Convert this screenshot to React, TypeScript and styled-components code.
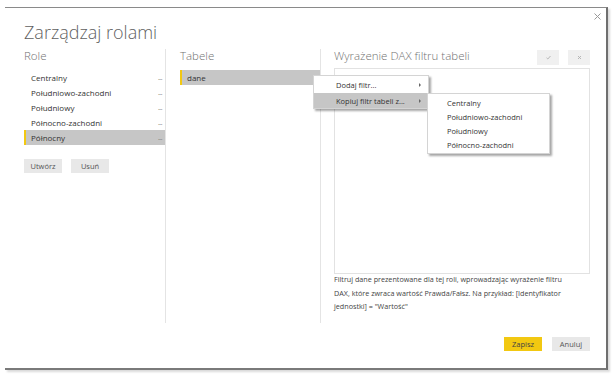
import React from 'react';
import styled, { createGlobalStyle } from 'styled-components';

const GlobalStyle = createGlobalStyle`
  html, body {
    margin: 0;
    padding: 0;
    background: #ffffff;
  }
  body {
    font-family: "Open Sans", "Noto Sans", sans-serif;
    color: #333;
  }
`;

const roles = ['Centralny', 'Południowo-zachodni', 'Południowy', 'Północno-zachodni', 'Północny'];

const App: React.FC = () => {
  const selectedRole = 'Północny';

  return (
    <>
      <GlobalStyle />
      <Page>
        <Dialog>
          <Header>
            <Title>Zarządzaj rolami</Title>
            <CloseButton aria-label="close">
              <svg width="7" height="7" viewBox="0 0 7 7">
                <path d="M0.5 0.5 L6.5 6.5 M6.5 0.5 L0.5 6.5" stroke="#9a9a9a" strokeWidth="1" />
              </svg>
            </CloseButton>
          </Header>

          <Columns>
            <RoleColumn>
              <ColumnTitle>Role</ColumnTitle>
              <List>
                {roles.map((r) => (
                  <ListRow key={r} selected={r === selectedRole}>
                    <span>{r}</span>
                    <Dots>...</Dots>
                  </ListRow>
                ))}
              </List>
              <ButtonRow>
                <GrayButton>Utwórz</GrayButton>
                <GrayButton>Usuń</GrayButton>
              </ButtonRow>
            </RoleColumn>

            <TableColumn>
              <ColumnTitle>Tabele</ColumnTitle>
              <List>
                <ListRow selected>
                  <span>dane</span>
                  <ContextMenu>
                    <MenuItem>
                      <span>Dodaj filtr...</span>
                      <Arrow />
                    </MenuItem>
                    <MenuItem active>
                      <span>Kopiuj filtr tabeli z...</span>
                      <Arrow />
                      <SubMenu>
                        {roles.slice(0, 4).map((r) => (
                          <SubMenuItem key={r}>{r}</SubMenuItem>
                        ))}
                      </SubMenu>
                    </MenuItem>
                  </ContextMenu>
                </ListRow>
              </List>
            </TableColumn>

            <DaxColumn>
              <DaxHeader>
                <ColumnTitle>Wyrażenie DAX filtru tabeli</ColumnTitle>
                <IconButtons>
                  <SmallIconButton>
                    <svg width="5" height="5" viewBox="0 0 5 5">
                      <path d="M0.5 2.8 L1.8 4 L4.5 1" stroke="#b0b0b0" strokeWidth="0.9" fill="none" />
                    </svg>
                  </SmallIconButton>
                  <SmallIconButton>
                    <svg width="5" height="5" viewBox="0 0 5 5">
                      <path d="M1 1 L4 4 M4 1 L1 4" stroke="#b0b0b0" strokeWidth="0.9" />
                    </svg>
                  </SmallIconButton>
                </IconButtons>
              </DaxHeader>
              <Editor />
              <Hint>
                Filtruj dane prezentowane dla tej roli, wprowadzając wyrażenie filtru DAX, które zwraca wartość
                Prawda/Fałsz. Na przykład: [Identyfikator jednostki] = "Wartość"
              </Hint>
            </DaxColumn>
          </Columns>

          <Footer>
            <PrimaryButton>Zapisz</PrimaryButton>
            <GrayButton>Anuluj</GrayButton>
          </Footer>
        </Dialog>
      </Page>
    </>
  );
};

export default App;

const Page = styled.div`
  width: 616px;
  height: 376px;
  padding: 7px 0 0 5px;
  box-sizing: border-box;
`;

const Dialog = styled.div`
  width: 603px;
  height: 363px;
  box-sizing: border-box;
  border-top: 1px solid #8a8a8a;
  border-right: 2px solid #6f6f6f;
  border-bottom: 2px solid #7a7a7a;
  box-shadow: 2px 2px 2px rgba(0, 0, 0, 0.15);
  background: #fff;
  display: flex;
  flex-direction: column;
  padding: 0 0 0 19px;
`;

const Header = styled.div`
  display: flex;
  justify-content: space-between;
  align-items: flex-start;
  height: 41px;
`;

const Title = styled.h1`
  margin: 13px 0 0 0;
  font-size: 18px;
  line-height: 22px;
  font-weight: 300;
  color: #5f5f5f;
`;

const CloseButton = styled.div`
  width: 7px;
  height: 7px;
  margin: 5px 5px 0 0;
  display: flex;
`;

const Columns = styled.div`
  display: grid;
  grid-template-columns: 142px 155px 269px;
  height: 274px;
`;

const ColumnBase = styled.div`
  display: flex;
  flex-direction: column;
  box-sizing: border-box;
  min-width: 0;
`;

const RoleColumn = styled(ColumnBase)`
  border-right: 1px solid #e4e4e4;
`;

const TableColumn = styled(ColumnBase)`
  padding-left: 14px;
  border-right: 1px solid #e4e4e4;
`;

const DaxColumn = styled(ColumnBase)`
  padding-left: 13px;
`;

const ColumnTitle = styled.div`
  font-size: 11.5px;
  line-height: 14px;
  font-weight: 300;
  color: #727272;
  height: 21px;
`;

const List = styled.div`
  display: flex;
  flex-direction: column;
`;

const ListRow = styled.div<{ selected?: boolean }>`
  position: relative;
  height: 15px;
  display: flex;
  align-items: center;
  justify-content: space-between;
  box-sizing: border-box;
  padding: 0 3px 0 5px;
  font-size: 8px;
  color: #333;
  background: ${(p) => (p.selected ? '#c6c6c6' : 'transparent')};
  border-left: 2px solid ${(p) => (p.selected ? '#f2c811' : 'transparent')};
`;

const Dots = styled.span`
  font-size: 7px;
  color: #777;
  letter-spacing: -0.5px;
`;

const ButtonRow = styled.div`
  display: flex;
  gap: 9px;
  margin-top: 14px;
`;

const ButtonBase = styled.button`
  width: 38px;
  height: 14px;
  border: none;
  padding: 0;
  font-family: "Open Sans", "Noto Sans", sans-serif;
  font-size: 7.5px;
  color: #555;
`;

const GrayButton = styled(ButtonBase)`
  background: #e8e8e8;
`;

const PrimaryButton = styled(ButtonBase)`
  background: #f2c811;
  color: #444;
`;

const ContextMenu = styled.div`
  position: absolute;
  left: 131px;
  top: 5px;
  width: 114px;
  padding: 1px 0 0 0;
  background: #fff;
  border: 1px solid #d4d4d4;
  box-shadow: 2px 2px 2px rgba(0, 0, 0, 0.35);
  z-index: 2;
`;

const MenuItem = styled.div<{ active?: boolean }>`
  position: relative;
  height: 15px;
  display: flex;
  align-items: center;
  justify-content: space-between;
  padding: 0 7px 0 22px;
  margin-top: ${(p) => (p.active ? '1px' : '0')};
  font-size: 7.5px;
  color: #333;
  background: ${(p) => (p.active ? '#c6c6c6' : 'transparent')};
`;

const Arrow = styled.span`
  width: 0;
  height: 0;
  border-top: 2px solid transparent;
  border-bottom: 2px solid transparent;
  border-left: 2.5px solid #666;
`;

const SubMenu = styled.div`
  position: absolute;
  left: 113px;
  top: 0;
  width: 121px;
  padding: 2px 0 1px 0;
  background: #fff;
  border: 1px solid #d4d4d4;
  box-shadow: 2px 2px 2px rgba(0, 0, 0, 0.35);
`;

const SubMenuItem = styled.div`
  height: 14px;
  display: flex;
  align-items: center;
  padding-left: 19px;
  font-size: 7.5px;
  color: #333;
`;

const DaxHeader = styled.div`
  display: flex;
  justify-content: space-between;
  align-items: flex-start;
  height: 19px;
`;

const IconButtons = styled.div`
  display: flex;
  gap: 9px;
  margin-top: 1px;
`;

const SmallIconButton = styled.div`
  width: 22px;
  height: 15px;
  background: #f0f0f0;
  display: flex;
  align-items: center;
  justify-content: center;
`;

const Editor = styled.div`
  height: 206px;
  border: 1px solid #e2e2e2;
  box-sizing: border-box;
`;

const Hint = styled.p`
  max-width: 240px;
  margin: -1px 0 0 0;
  font-size: 7.2px;
  line-height: 13.5px;
  color: #444;
`;

const Footer = styled.div`
  display: flex;
  justify-content: flex-end;
  gap: 10px;
  padding: 14px 16px 0 0;
`;
